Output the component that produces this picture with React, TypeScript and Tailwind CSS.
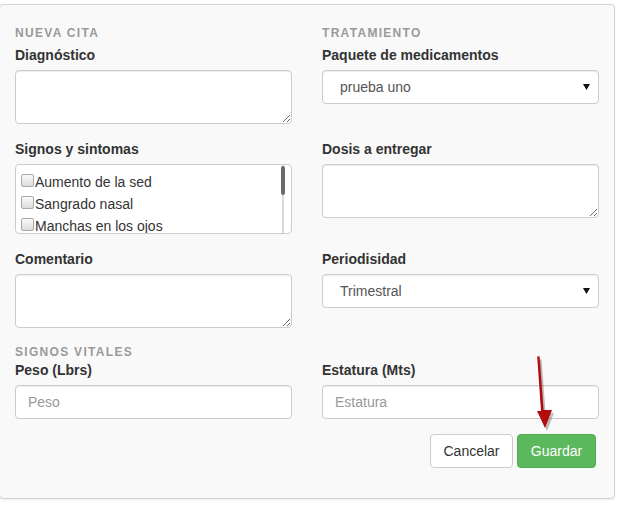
import React from "react";

const sintomas = ["Aumento de la sed", "Sangrado nasal", "Manchas en los ojos"];

function SectionTitle({ children, tight }: { children?: React.ReactNode; tight?: boolean }) {
  return (
    <div
      className={
        (tight ? "h-[17px] " : "h-[19px] ") +
        "text-[12px] leading-[18px] font-bold uppercase tracking-[1.3px] text-[#999]"
      }
    >
      {children}
    </div>
  );
}

function Label({ children }: { children: React.ReactNode }) {
  return <div className="mb-[5px] text-[14px] leading-[20px] font-bold text-[#333]">{children}</div>;
}

function SelectBox({ value }: { value: string }) {
  return (
    <div className="relative">
      <select
        defaultValue={value}
        className="block h-[34px] w-full appearance-none rounded-[4px] border border-[#ccc] bg-white pl-[17px] text-[14px] text-[#555] shadow-[inset_0_1px_1px_rgba(0,0,0,0.075)] outline-none"
      >
        <option>{value}</option>
      </select>
      <svg className="pointer-events-none absolute right-[9px] top-[14px]" width="7" height="6" viewBox="0 0 7 6">
        <path d="M0 0H7L3.5 6Z" fill="#111" />
      </svg>
    </div>
  );
}

function TextArea() {
  return (
    <textarea className="block h-[54px] w-full rounded-[4px] border border-[#ccc] bg-white shadow-[inset_0_1px_1px_rgba(0,0,0,0.075)] outline-none" />
  );
}

function TextInput({ placeholder }: { placeholder: string }) {
  return (
    <input
      placeholder={placeholder}
      className="block h-[34px] w-full rounded-[4px] border border-[#ccc] bg-white px-[12px] text-[14px] text-[#555] placeholder:text-[#999] shadow-[inset_0_1px_1px_rgba(0,0,0,0.075)] outline-none"
    />
  );
}

export default function App() {
  return (
    <div className="relative h-[506px] w-[623px] overflow-hidden bg-white font-['Liberation_Sans',Arial,sans-serif]">
      <div className="ml-[-1px] mt-[4px] w-[616px] rounded-[4px] border border-[#d3d3d3] bg-[#f9f9f9] px-[15px] pb-[30px] pt-[19px] shadow-[0_1px_2px_rgba(0,0,0,0.08)]">
        <div className="grid grid-cols-2 gap-x-[30px]">
          {/* fila 1 */}
          <div className="mb-[15px]">
            <SectionTitle>Nueva cita</SectionTitle>
            <div className="mt-[2px]">
              <Label>Diagnóstico</Label>
              <TextArea />
            </div>
          </div>
          <div className="mb-[15px]">
            <SectionTitle>Tratamiento</SectionTitle>
            <div className="mt-[2px]">
              <Label>Paquete de medicamentos</Label>
              <SelectBox value="prueba uno" />
            </div>
          </div>

          {/* fila 2 */}
          <div className="mb-[15px]">
            <Label>Signos y sintomas</Label>
            <div className="relative h-[70px] overflow-hidden rounded-[4px] border border-[#ccc] bg-white pl-[5px] pt-[6px]">
              {sintomas.map((s) => (
                <div key={s} className="flex h-[22px] items-center text-[14px] text-[#333]">
                  <span className="mb-[3px] mr-[1px] inline-block h-[13px] w-[13px] rounded-[2px] border border-[#a9a9a9] bg-gradient-to-b from-[#fafafa] to-[#dcdcdc]" />
                  {s}
                </div>
              ))}
              <div className="absolute bottom-0 right-[7px] top-0 w-[2px] bg-[#dadada]" />
              <div className="absolute right-[6px] top-[1px] h-[29px] w-[4px] rounded-[2px] bg-[#6b6b6b]" />
            </div>
          </div>
          <div className="mb-[15px]">
            <Label>Dosis a entregar</Label>
            <TextArea />
          </div>

          {/* fila 3 */}
          <div className="mb-[15px]">
            <Label>Comentario</Label>
            <TextArea />
          </div>
          <div className="mb-[15px]">
            <Label>Periodisidad</Label>
            <SelectBox value="Trimestral" />
          </div>
        </div>

        <SectionTitle tight>Signos vitales</SectionTitle>
        <div className="grid grid-cols-2 gap-x-[30px]">
          <div className="mb-[15px]">
            <Label>Peso (Lbrs)</Label>
            <TextInput placeholder="Peso" />
          </div>
          <div className="mb-[15px]">
            <Label>Estatura (Mts)</Label>
            <TextInput placeholder="Estatura" />
          </div>
        </div>

        <div className="flex justify-end gap-[4px] pr-[3px]">
          <button className="h-[34px] w-[83px] rounded-[4px] border border-[#ccc] bg-white text-[14px] text-[#333]">
            Cancelar
          </button>
          <button className="h-[34px] w-[79px] rounded-[4px] border border-[#4cae4c] bg-[#5cb85c] text-[14px] text-white">
            Guardar
          </button>
        </div>
      </div>

      {/* flecha */}
      <svg className="pointer-events-none absolute left-[525px] top-[350px]" width="40" height="90" viewBox="0 0 40 90">
        <g transform="translate(2,3)" fill="#000" opacity="0.25">
          <path d="M12.2 6.5 L14.6 6.3 L18.6 60 L27 60 L20 78 L12 61 L16 61 Z" />
        </g>
        <path d="M12.2 6.5 L14.6 6.3 L18.6 60 L27 60 L20 78 L12 61 L16 61 Z" fill="#b40c0c" />
      </svg>
    </div>
  );
}
